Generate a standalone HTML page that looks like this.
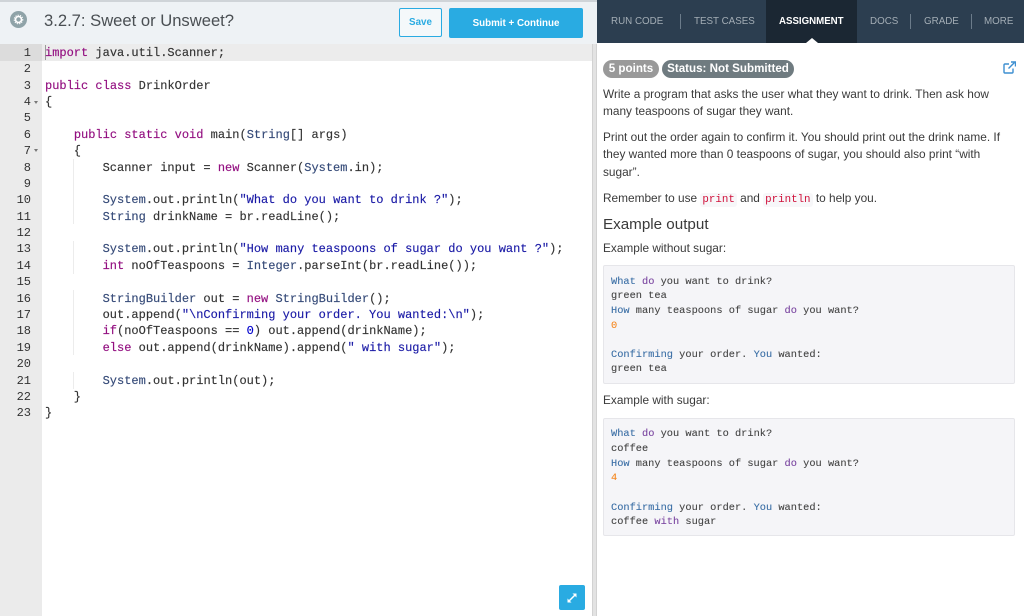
<!DOCTYPE html>
<html><head><meta charset="utf-8"><style>
*{box-sizing:border-box}
html,body{margin:0;padding:0;width:1024px;height:616px;overflow:hidden;background:#fff;position:relative;font-family:"Liberation Sans",sans-serif;color:#3b3b3b}
.a{position:absolute;white-space:pre}
.c{position:absolute;left:45px;white-space:pre;font:12px/16px "Liberation Mono",monospace;color:#333;-webkit-text-stroke:.15px currentColor}
.n{position:absolute;left:0;width:31px;text-align:right;white-space:pre;font:12px/16px "Liberation Mono",monospace;color:#333}
.k{color:#930f80}.t{color:#354a78}.s{color:#1a1aa6}.d{color:#0000cd}
.p{position:absolute;left:603px;white-space:pre;font-size:11.85px;line-height:15px;color:#3a3a3a}
.o{position:absolute;left:611px;white-space:pre;font:10.33px/15px "Liberation Mono",monospace;color:#444;-webkit-text-stroke:.1px currentColor}
.b{color:#3a6ea5}.v{color:#7a45a0}.r{color:#f5871f}
.code{font:10.8px/14px "Liberation Mono",monospace;color:#d0103a;background:#f7f7f9;padding:1px 2px;border-radius:3px}
.tab{position:absolute;top:15px;font-size:9.8px;line-height:13px;color:#a3adb5;white-space:pre}
.g{position:absolute;left:73px;width:1px;background:#ececec}
</style></head><body>
<div class="a" style="left:0;top:0;width:597px;height:44px;background:#eef2f5;border-top:2px solid #cfd4d8"></div>
<div class="a" style="left:10px;top:11px;width:17px;height:17px;border-radius:50%;background:#8fa3a8"></div>
<svg class="a" style="left:13px;top:14px" width="11" height="11" viewBox="0 0 11 11"><circle cx="5.5" cy="5.5" r="3" fill="none" stroke="#fff" stroke-width="1.6"/><circle cx="5.5" cy="5.5" r="4.3" fill="none" stroke="#fff" stroke-width="1" stroke-dasharray="1.3 1.1"/></svg>
<div class="a" style="left:44px;top:11px;font-size:16.6px;line-height:20px;color:#4a4f53">3.2.7: Sweet or Unsweet?</div>
<div class="a" style="left:399px;top:8px;width:43px;height:29px;border:1px solid #29abe2;border-radius:2px;background:#f4f8fa;color:#29abe2;font-size:9.8px;font-weight:bold;line-height:27px;text-align:center">Save</div>
<div class="a" style="left:449px;top:8px;width:134px;height:30px;border-radius:2px;background:#29abe2;color:#fff;font-size:9.8px;font-weight:bold;line-height:31px;text-align:center">Submit + Continue</div>

<div class="a" style="left:0;top:44px;width:42px;height:572px;background:#ebebeb"></div>
<div class="a" style="left:42px;top:44px;width:550px;height:17px;background:#ececec"></div>
<div class="a" style="left:0;top:44px;width:42px;height:17px;background:#dcdcdc"></div>
<div class="a" style="left:45px;top:45px;width:1px;height:15px;background:#999"></div>
<div class="a" style="left:592px;top:44px;width:5px;height:572px;background:#e3e3e3;border-left:1px solid #d2d2d2;border-right:1px solid #d2d2d2"></div>

<div class="g" style="top:159px;height:65px"></div>
<div class="g" style="top:241px;height:33px"></div>
<div class="g" style="top:290px;height:65px"></div>
<div class="g" style="top:372px;height:17px"></div>

<div class="n" style="top:45px">1</div>
<div class="n" style="top:61px">2</div>
<div class="n" style="top:78px">3</div>
<div class="n" style="top:94px">4</div><div class="a" style="left:34px;top:101px;width:0;height:0;border:2px solid transparent;border-top:3px solid #777"></div>
<div class="n" style="top:110px">5</div>
<div class="n" style="top:127px">6</div>
<div class="n" style="top:143px">7</div><div class="a" style="left:34px;top:149px;width:0;height:0;border:2px solid transparent;border-top:3px solid #777"></div>
<div class="n" style="top:160px">8</div>
<div class="n" style="top:176px">9</div>
<div class="n" style="top:192px">10</div>
<div class="n" style="top:209px">11</div>
<div class="n" style="top:225px">12</div>
<div class="n" style="top:241px">13</div>
<div class="n" style="top:258px">14</div>
<div class="n" style="top:274px">15</div>
<div class="n" style="top:291px">16</div>
<div class="n" style="top:307px">17</div>
<div class="n" style="top:323px">18</div>
<div class="n" style="top:340px">19</div>
<div class="n" style="top:356px">20</div>
<div class="n" style="top:373px">21</div>
<div class="n" style="top:389px">22</div>
<div class="n" style="top:405px">23</div>

<div class="c" style="top:45px"><span class="k">import</span> java.util.Scanner;</div>
<div class="c" style="top:78px"><span class="k">public</span> <span class="k">class</span> DrinkOrder</div>
<div class="c" style="top:94px">{</div>
<div class="c" style="top:127px">    <span class="k">public</span> <span class="k">static</span> <span class="k">void</span> main(<span class="t">String</span>[] args)</div>
<div class="c" style="top:143px">    {</div>
<div class="c" style="top:160px">        Scanner input = <span class="k">new</span> Scanner(<span class="t">System</span>.in);</div>
<div class="c" style="top:192px">        <span class="t">System</span>.out.println(<span class="s">"What do you want to drink ?"</span>);</div>
<div class="c" style="top:209px">        <span class="t">String</span> drinkName = br.readLine();</div>
<div class="c" style="top:241px">        <span class="t">System</span>.out.println(<span class="s">"How many teaspoons of sugar do you want ?"</span>);</div>
<div class="c" style="top:258px">        <span class="k">int</span> noOfTeaspoons = <span class="t">Integer</span>.parseInt(br.readLine());</div>
<div class="c" style="top:291px">        <span class="t">StringBuilder</span> out = <span class="k">new</span> <span class="t">StringBuilder</span>();</div>
<div class="c" style="top:307px">        out.append(<span class="s">"\nConfirming your order. You wanted:\n"</span>);</div>
<div class="c" style="top:323px">        <span class="k">if</span>(noOfTeaspoons == <span class="d">0</span>) out.append(drinkName);</div>
<div class="c" style="top:340px">        <span class="k">else</span> out.append(drinkName).append(<span class="s">" with sugar"</span>);</div>
<div class="c" style="top:373px">        <span class="t">System</span>.out.println(out);</div>
<div class="c" style="top:389px">    }</div>
<div class="c" style="top:405px">}</div>

<div class="a" style="left:559px;top:585px;width:26px;height:25px;background:#29abe2;border-radius:2px"></div>
<svg class="a" style="left:565px;top:591px" width="14" height="14" viewBox="0 0 14 14"><path d="M3.5 10.5L10.5 3.5" stroke="#fff" stroke-width="1.5"/><path d="M7.5 2.5H11.5V6.5zM6.5 11.5H2.5V7.5z" fill="#fff"/></svg>

<div class="a" style="left:597px;top:0;width:427px;height:43px;background:#2c3e50"></div>
<div class="a" style="left:766px;top:0;width:91px;height:43px;background:#1b2733"></div>
<div class="a" style="left:806px;top:38px;width:0;height:0;border:6px solid transparent;border-top:0;border-bottom:5px solid #fff"></div>
<div class="tab" style="left:611px">RUN CODE</div>
<div class="a" style="left:680px;top:14px;width:1px;height:15px;background:#6b7b8a"></div>
<div class="tab" style="left:694px">TEST CASES</div>
<div class="tab" style="left:779px;color:#fff;font-weight:bold;font-size:9.7px">ASSIGNMENT</div>
<div class="tab" style="left:870px">DOCS</div>
<div class="a" style="left:910px;top:14px;width:1px;height:15px;background:#6b7b8a"></div>
<div class="tab" style="left:924px">GRADE</div>
<div class="a" style="left:971px;top:14px;width:1px;height:15px;background:#6b7b8a"></div>
<div class="tab" style="left:984px">MORE</div>

<div class="a" style="left:603px;top:60px;width:56px;height:18px;border-radius:9px;background:#999;color:#fff;font-size:11.6px;font-weight:bold;line-height:18px;text-align:center">5 points</div>
<div class="a" style="left:662px;top:60px;width:132px;height:18px;border-radius:9px;background:#6f7b80;color:#fff;font-size:11.6px;font-weight:bold;line-height:18px;text-align:center">Status: Not Submitted</div>
<svg class="a" style="left:1003px;top:61px" width="13" height="13" viewBox="0 0 13 13" fill="none" stroke="#3d8fd1" stroke-width="1.4"><path d="M10 7.5V11a1 1 0 0 1-1 1H2a1 1 0 0 1-1-1V4a1 1 0 0 1 1-1h4"/><path d="M5.5 7.5L11.5 1.5"/><path d="M8 1h4.5v4.5" /></svg>

<div class="p" style="top:87px">Write a program that asks the user what they want to drink. Then ask how</div>
<div class="p" style="top:104px">many teaspoons of sugar they want.</div>
<div class="p" style="top:130px">Print out the order again to confirm it. You should print out the drink name. If</div>
<div class="p" style="top:147px">they wanted more than 0 teaspoons of sugar, you should also print “with</div>
<div class="p" style="top:165px">sugar”.</div>
<div class="p" style="top:191px">Remember to use <span class="code">print</span> and <span class="code">println</span> to help you.</div>
<div class="p" style="top:216px;font-size:15.2px;line-height:17px">Example output</div>
<div class="p" style="top:241px">Example without sugar:</div>
<div class="a" style="left:603px;top:265px;width:412px;height:119px;background:#f5f5f8;border:1px solid #e6e6ea;border-radius:2px"></div>
<div class="o" style="top:275px"><span class="b">What</span> <span class="v">do</span> you want to drink?</div>
<div class="o" style="top:289px">green tea</div>
<div class="o" style="top:304px"><span class="b">How</span> many teaspoons of sugar <span class="v">do</span> you want?</div>
<div class="o" style="top:319px"><span class="r">0</span></div>
<div class="o" style="top:348px"><span class="b">Confirming</span> your order. <span class="b">You</span> wanted:</div>
<div class="o" style="top:362px">green tea</div>
<div class="p" style="top:393px">Example with sugar:</div>
<div class="a" style="left:603px;top:418px;width:412px;height:118px;background:#f5f5f8;border:1px solid #e6e6ea;border-radius:2px"></div>
<div class="o" style="top:427px"><span class="b">What</span> <span class="v">do</span> you want to drink?</div>
<div class="o" style="top:442px">coffee</div>
<div class="o" style="top:457px"><span class="b">How</span> many teaspoons of sugar <span class="v">do</span> you want?</div>
<div class="o" style="top:471px"><span class="r">4</span></div>
<div class="o" style="top:501px"><span class="b">Confirming</span> your order. <span class="b">You</span> wanted:</div>
<div class="o" style="top:515px">coffee <span class="v">with</span> sugar</div>
</body></html>
